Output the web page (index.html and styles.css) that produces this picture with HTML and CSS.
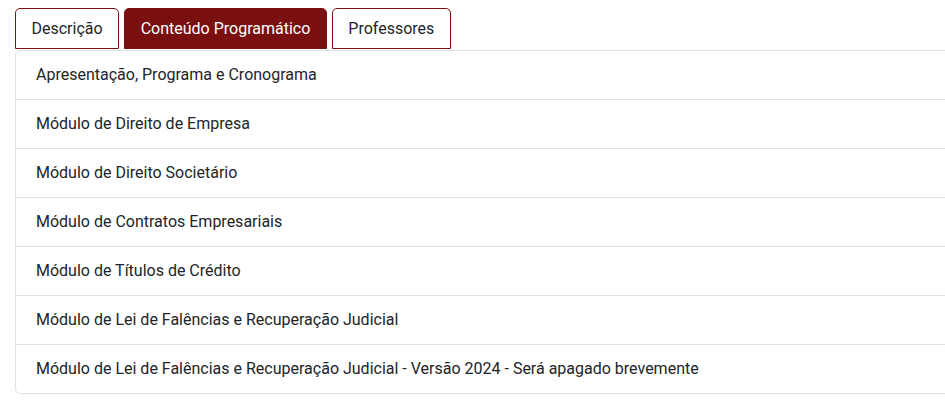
FILE: index.html
```html
<!DOCTYPE html>
<html lang="pt">
<head>
<meta charset="utf-8">
<link rel="stylesheet" href="styles.css">
</head>
<body>
<div class="wrap">
  <ul class="tabs">
    <li class="tab">Descrição</li>
    <li class="tab active">Conteúdo Programático</li>
    <li class="tab">Professores</li>
  </ul>
  <ul class="list">
    <li class="item">Apresentação, Programa e Cronograma</li>
    <li class="item">Módulo de Direito de Empresa</li>
    <li class="item">Módulo de Direito Societário</li>
    <li class="item">Módulo de Contratos Empresariais</li>
    <li class="item">Módulo de Títulos de Crédito</li>
    <li class="item">Módulo de Lei de Falências e Recuperação Judicial</li>
    <li class="item">Módulo de Lei de Falências e Recuperação Judicial - Versão 2024 - Será apagado brevemente</li>
  </ul>
</div>
</body>
</html>
```
FILE: styles.css
```css
html, body {
  margin: 0;
  padding: 0;
  overflow: hidden;
  background: #fff;
}
body {
  font-family: Roboto, "Liberation Sans", sans-serif;
  color: #212529;
}
.wrap {
  padding: 8px 0 0 15px;
  width: 1000px;
}
.tabs {
  list-style: none;
  margin: 0 0 1px;
  padding: 0;
  display: flex;
  gap: 5px;
}
.tab {
  font-size: 16px;
  line-height: 24px;
  padding: 8px 15.5px 7px;
  border: 1px solid #7a1010;
  border-radius: 5px 5px 0 0;
  color: #212529;
  background: #fff;
}
.tab.active {
  background: #7a0f0f;
  color: #fff;
}
.list {
  list-style: none;
  margin: 0;
  padding: 0;
  border: 1px solid #dee2e6;
  border-radius: 5px;
}
.item {
  font-size: 16px;
  line-height: 24px;
  padding: 12px 20px;
  border-top: 1px solid #dee2e6;
}
.item:first-child {
  border-top: none;
}
```
